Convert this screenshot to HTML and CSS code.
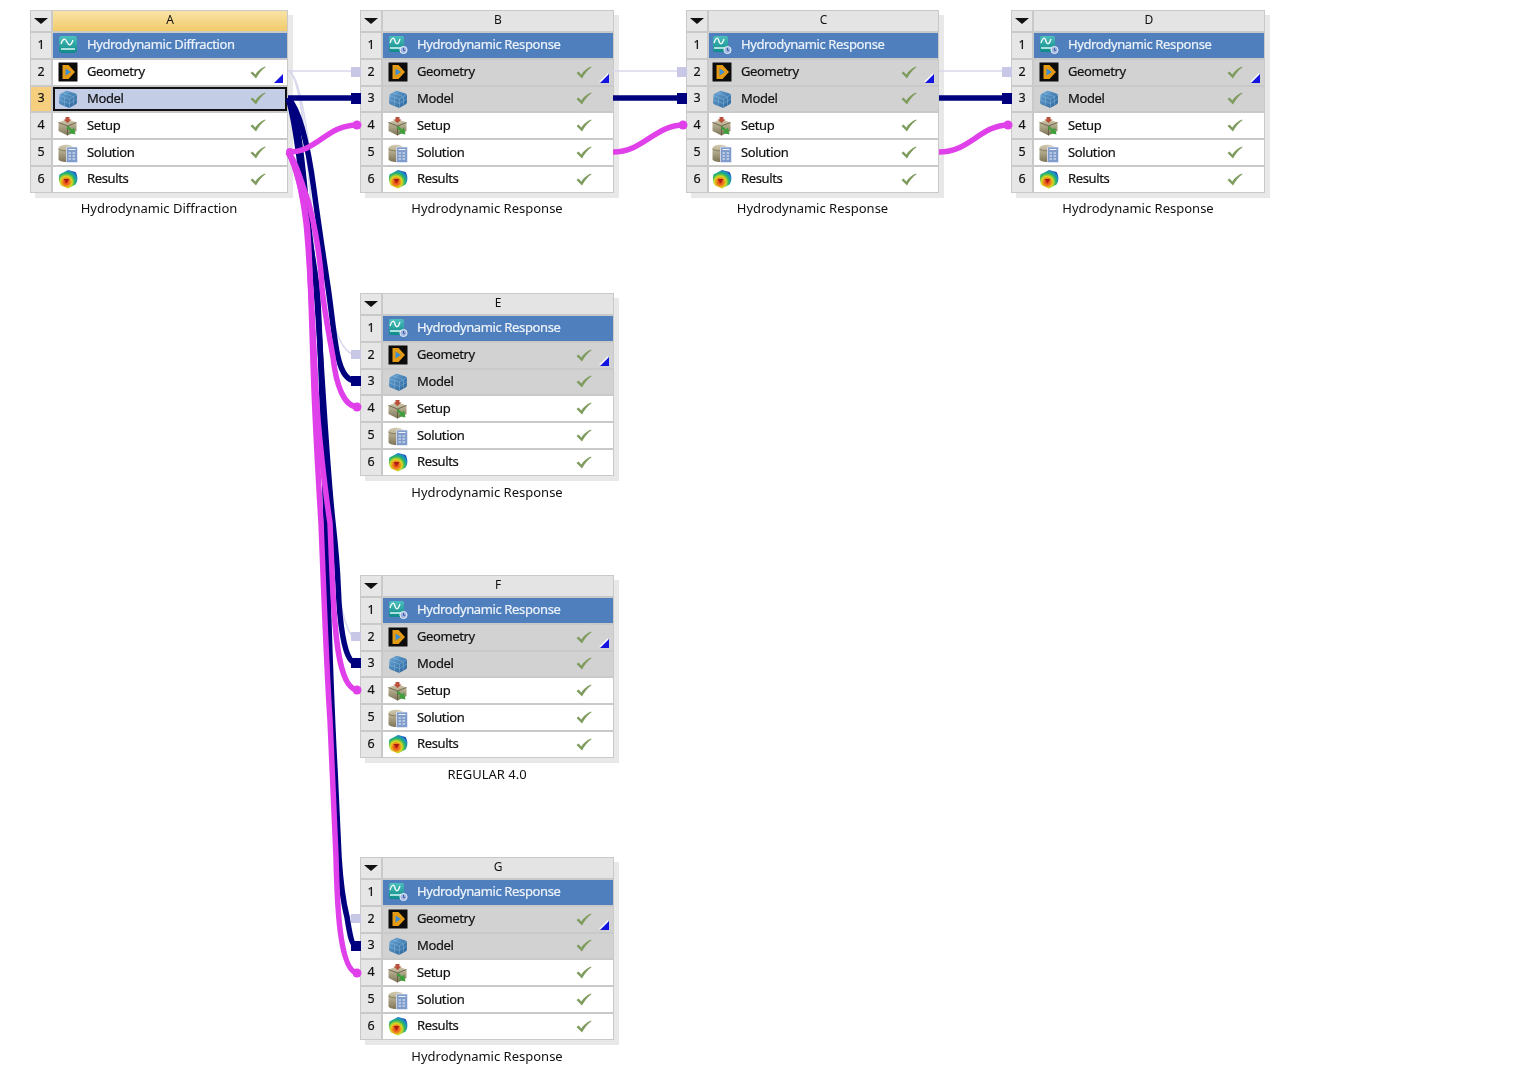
FILE: index.html
```html
<!DOCTYPE html>
<html lang="en">
<head>
    <meta charset="UTF-8">
    <title>Project Schematic</title>
    <link rel="stylesheet" href="styles.css">
</head>
<body>
    <!-- shared icons -->
    <svg class="defs" width="0" height="0">
        <defs>
            <linearGradient id="g-teal" x1="0" y1="0" x2="0" y2="1"><stop offset="0" stop-color="#4cc0bc"/><stop offset="1" stop-color="#0e8a88"/></linearGradient>
            <linearGradient id="g-block" x1="0" y1="0" x2="1" y2="1"><stop offset="0" stop-color="#6ba6d4"/><stop offset="1" stop-color="#2a6298"/></linearGradient>
            <linearGradient id="g-tan" x1="0" y1="0" x2="0" y2="1"><stop offset="0" stop-color="#d4ccb0"/><stop offset="1" stop-color="#7e7558"/></linearGradient>
            <radialGradient id="g-res" cx="0.4" cy="0.65" r="0.68"><stop offset="0" stop-color="#d82818"/><stop offset="0.28" stop-color="#f0801c"/><stop offset="0.46" stop-color="#d8d820"/><stop offset="0.68" stop-color="#28b468"/><stop offset="0.9" stop-color="#1c8cc8"/><stop offset="1" stop-color="#1c4cb8"/></radialGradient>
            <symbol id="i-diff" viewBox="0 0 20 20">
                <rect x="1" y="1" width="18" height="17" rx="3" fill="url(#g-teal)"/>
                <path d="M3 9c2-6 4-6 6-2s4 4 6-2" fill="none" stroke="#fff" stroke-width="1.300"/>
                <path d="M3 14h14" stroke="#e8ffff" stroke-width="1.400"/>
            </symbol>
            <symbol id="i-resp" viewBox="0 0 20 20">
                <rect x="1" y="1" width="15" height="16" rx="2" fill="url(#g-teal)"/>
                <path d="M2 8c2-6 4-6 5-2s3 4 5-2" fill="none" stroke="#fff" stroke-width="1.300"/>
                <path d="M2 13h11" stroke="#e8ffff" stroke-width="1.400"/>
                <circle cx="15.500" cy="15" r="3.600" fill="#9fb4e0" stroke="#fff" stroke-width=".8"/>
                <path d="M15.500 13v2.400h1.600" fill="none" stroke="#2f4f96" stroke-width=".9"/>
            </symbol>
            <symbol id="i-geom" viewBox="0 0 20 20">
                <rect x="0.500" y="0.500" width="19" height="19" fill="#0c0c0c"/>
                <path d="M4.500 3h6l6.500 7-6.500 7h-6z" fill="#e49a12"/>
                <path d="M7.500 6.500l5.500 3.500-5.500 3.500z" fill="#3f8fd0"/>
            </symbol>
            <symbol id="i-model" viewBox="0 0 20 20">
                <path d="M1.500 6.500Q1.500 5 3 4.500L8 2Q9 1.500 10 2L17.500 4.500Q19 5 19 6.500V13Q19 14.500 17.500 15.500L12 18.500Q11 19 10 18.500L2.500 15.500Q1 15 1 13.500z" fill="url(#g-block)"/>
                <path d="M1.500 6.500l10 3.500 7.500-4.500M11.500 10v8.500M1.500 11l10 3.500 7.500-4.500M6.500 8.500v8M15.500 8v8M5 4l10 3.500M11 2.500l-5 3" fill="none" stroke="#8fc0e4" stroke-width=".6" opacity=".7"/>
            </symbol>
            <symbol id="i-setup" viewBox="0 0 20 20">
                <path d="M0.500 6.500l9-3.500 9 3.500v8.500l-9 4.500-9-4.500z" fill="url(#g-tan)"/>
                <path d="M0.500 6.500l9 3.500 9-3.500M9.500 10v9.500" fill="none" stroke="#5e563e" stroke-width=".8"/>
                <path d="M7.500 1h4v2.500h2l-4 3.500-4-3.500h2z" fill="#b8503a"/>
                <path d="M8.500 12l2-2 3.500 3.500 2-2 1.500 7-7-1.500 2-2z" fill="#3f9f3c"/>
            </symbol>
            <symbol id="i-sol" viewBox="0 0 20 20">
                <path d="M0.500 5.500c0-5 15-5 15 0v10.500c0 4-15 4-15 0z" fill="url(#g-tan)"/>
                <path d="M0.500 6c3 2.500 12 2.500 15 0" fill="none" stroke="#6e664c" stroke-width=".7"/>
                <rect x="8.500" y="4" width="11" height="15.500" rx="1" fill="#7f9cca" stroke="#eef" stroke-width=".7"/>
                <path d="M10.500 6.500h7M10.500 10h2.500M14.500 10h2.500M10.500 13h2.500M14.500 13h2.500M10.500 16h2.500M14.500 16h2.500" stroke="#eef3fb" stroke-width="1.100"/>
            </symbol>
            <symbol id="i-res" viewBox="0 0 20 20">
                <path d="M1.500 5.500L10 1 17.500 3C20 7 20 12 17.500 15.500L10 19.500 3 16.500C0.500 13 0.500 9 1.500 5.500z" fill="url(#g-res)"/>
                <path d="M5.500 10h6l-3 4z" fill="#a81c10"/>
            </symbol>
            <symbol id="i-check" viewBox="0 0 16 13">
                <path d="M0.500 7l2-1.500 2.800 3C7.500 5 10.500 2.500 15 .5l.5.7C11.500 4 8.500 8 6 12.500z" fill="#7f9c5f"/>
            </symbol>
        </defs>
    </svg>

    <div class="canvas">

        <div class="system sys-a">
            <div class="table">
                <div class="menu"><span class="arrow"></span></div><div class="letter letter-active">A</div>
                <div class="num">1</div><div class="cell cell-title"><svg class="icon"><use href="#i-diff"/></svg><span class="name">Hydrodynamic Diffraction</span></div>
                <div class="num">2</div><div class="cell"><svg class="icon"><use href="#i-geom"/></svg><span class="name">Geometry</span><svg class="check"><use href="#i-check"/></svg><span class="corner"></span></div>
                <div class="num num-active">3</div><div class="cell cell-selected"><svg class="icon"><use href="#i-model"/></svg><span class="name">Model</span><svg class="check"><use href="#i-check"/></svg></div>
                <div class="num">4</div><div class="cell"><svg class="icon"><use href="#i-setup"/></svg><span class="name">Setup</span><svg class="check"><use href="#i-check"/></svg></div>
                <div class="num">5</div><div class="cell"><svg class="icon"><use href="#i-sol"/></svg><span class="name">Solution</span><svg class="check"><use href="#i-check"/></svg></div>
                <div class="num">6</div><div class="cell"><svg class="icon"><use href="#i-res"/></svg><span class="name">Results</span><svg class="check"><use href="#i-check"/></svg></div>
            </div>
            <div class="label">Hydrodynamic Diffraction</div>
        </div>

        <div class="system sys-b">
            <div class="table">
                <div class="menu"><span class="arrow"></span></div><div class="letter">B</div>
                <div class="num">1</div><div class="cell cell-title"><svg class="icon"><use href="#i-resp"/></svg><span class="name">Hydrodynamic Response</span></div>
                <div class="num">2</div><div class="cell cell-shared"><svg class="icon"><use href="#i-geom"/></svg><span class="name">Geometry</span><svg class="check"><use href="#i-check"/></svg><span class="corner corner-white"></span></div>
                <div class="num">3</div><div class="cell cell-shared"><svg class="icon"><use href="#i-model"/></svg><span class="name">Model</span><svg class="check"><use href="#i-check"/></svg></div>
                <div class="num">4</div><div class="cell"><svg class="icon"><use href="#i-setup"/></svg><span class="name">Setup</span><svg class="check"><use href="#i-check"/></svg></div>
                <div class="num">5</div><div class="cell"><svg class="icon"><use href="#i-sol"/></svg><span class="name">Solution</span><svg class="check"><use href="#i-check"/></svg></div>
                <div class="num">6</div><div class="cell"><svg class="icon"><use href="#i-res"/></svg><span class="name">Results</span><svg class="check"><use href="#i-check"/></svg></div>
            </div>
            <div class="label">Hydrodynamic Response</div>
        </div>

        <div class="system sys-c">
            <div class="table">
                <div class="menu"><span class="arrow"></span></div><div class="letter">C</div>
                <div class="num">1</div><div class="cell cell-title"><svg class="icon"><use href="#i-resp"/></svg><span class="name">Hydrodynamic Response</span></div>
                <div class="num">2</div><div class="cell cell-shared"><svg class="icon"><use href="#i-geom"/></svg><span class="name">Geometry</span><svg class="check"><use href="#i-check"/></svg><span class="corner corner-white"></span></div>
                <div class="num">3</div><div class="cell cell-shared"><svg class="icon"><use href="#i-model"/></svg><span class="name">Model</span><svg class="check"><use href="#i-check"/></svg></div>
                <div class="num">4</div><div class="cell"><svg class="icon"><use href="#i-setup"/></svg><span class="name">Setup</span><svg class="check"><use href="#i-check"/></svg></div>
                <div class="num">5</div><div class="cell"><svg class="icon"><use href="#i-sol"/></svg><span class="name">Solution</span><svg class="check"><use href="#i-check"/></svg></div>
                <div class="num">6</div><div class="cell"><svg class="icon"><use href="#i-res"/></svg><span class="name">Results</span><svg class="check"><use href="#i-check"/></svg></div>
            </div>
            <div class="label">Hydrodynamic Response</div>
        </div>

        <div class="system sys-d">
            <div class="table">
                <div class="menu"><span class="arrow"></span></div><div class="letter">D</div>
                <div class="num">1</div><div class="cell cell-title"><svg class="icon"><use href="#i-resp"/></svg><span class="name">Hydrodynamic Response</span></div>
                <div class="num">2</div><div class="cell cell-shared"><svg class="icon"><use href="#i-geom"/></svg><span class="name">Geometry</span><svg class="check"><use href="#i-check"/></svg><span class="corner corner-white"></span></div>
                <div class="num">3</div><div class="cell cell-shared"><svg class="icon"><use href="#i-model"/></svg><span class="name">Model</span><svg class="check"><use href="#i-check"/></svg></div>
                <div class="num">4</div><div class="cell"><svg class="icon"><use href="#i-setup"/></svg><span class="name">Setup</span><svg class="check"><use href="#i-check"/></svg></div>
                <div class="num">5</div><div class="cell"><svg class="icon"><use href="#i-sol"/></svg><span class="name">Solution</span><svg class="check"><use href="#i-check"/></svg></div>
                <div class="num">6</div><div class="cell"><svg class="icon"><use href="#i-res"/></svg><span class="name">Results</span><svg class="check"><use href="#i-check"/></svg></div>
            </div>
            <div class="label">Hydrodynamic Response</div>
        </div>

        <div class="system sys-e">
            <div class="table">
                <div class="menu"><span class="arrow"></span></div><div class="letter">E</div>
                <div class="num">1</div><div class="cell cell-title"><svg class="icon"><use href="#i-resp"/></svg><span class="name">Hydrodynamic Response</span></div>
                <div class="num">2</div><div class="cell cell-shared"><svg class="icon"><use href="#i-geom"/></svg><span class="name">Geometry</span><svg class="check"><use href="#i-check"/></svg><span class="corner corner-white"></span></div>
                <div class="num">3</div><div class="cell cell-shared"><svg class="icon"><use href="#i-model"/></svg><span class="name">Model</span><svg class="check"><use href="#i-check"/></svg></div>
                <div class="num">4</div><div class="cell"><svg class="icon"><use href="#i-setup"/></svg><span class="name">Setup</span><svg class="check"><use href="#i-check"/></svg></div>
                <div class="num">5</div><div class="cell"><svg class="icon"><use href="#i-sol"/></svg><span class="name">Solution</span><svg class="check"><use href="#i-check"/></svg></div>
                <div class="num">6</div><div class="cell"><svg class="icon"><use href="#i-res"/></svg><span class="name">Results</span><svg class="check"><use href="#i-check"/></svg></div>
            </div>
            <div class="label">Hydrodynamic Response</div>
        </div>

        <div class="system sys-f">
            <div class="table">
                <div class="menu"><span class="arrow"></span></div><div class="letter">F</div>
                <div class="num">1</div><div class="cell cell-title"><svg class="icon"><use href="#i-resp"/></svg><span class="name">Hydrodynamic Response</span></div>
                <div class="num">2</div><div class="cell cell-shared"><svg class="icon"><use href="#i-geom"/></svg><span class="name">Geometry</span><svg class="check"><use href="#i-check"/></svg><span class="corner corner-white"></span></div>
                <div class="num">3</div><div class="cell cell-shared"><svg class="icon"><use href="#i-model"/></svg><span class="name">Model</span><svg class="check"><use href="#i-check"/></svg></div>
                <div class="num">4</div><div class="cell"><svg class="icon"><use href="#i-setup"/></svg><span class="name">Setup</span><svg class="check"><use href="#i-check"/></svg></div>
                <div class="num">5</div><div class="cell"><svg class="icon"><use href="#i-sol"/></svg><span class="name">Solution</span><svg class="check"><use href="#i-check"/></svg></div>
                <div class="num">6</div><div class="cell"><svg class="icon"><use href="#i-res"/></svg><span class="name">Results</span><svg class="check"><use href="#i-check"/></svg></div>
            </div>
            <div class="label">REGULAR 4.0</div>
        </div>

        <div class="system sys-g">
            <div class="table">
                <div class="menu"><span class="arrow"></span></div><div class="letter">G</div>
                <div class="num">1</div><div class="cell cell-title"><svg class="icon"><use href="#i-resp"/></svg><span class="name">Hydrodynamic Response</span></div>
                <div class="num">2</div><div class="cell cell-shared"><svg class="icon"><use href="#i-geom"/></svg><span class="name">Geometry</span><svg class="check"><use href="#i-check"/></svg><span class="corner corner-white"></span></div>
                <div class="num">3</div><div class="cell cell-shared"><svg class="icon"><use href="#i-model"/></svg><span class="name">Model</span><svg class="check"><use href="#i-check"/></svg></div>
                <div class="num">4</div><div class="cell"><svg class="icon"><use href="#i-setup"/></svg><span class="name">Setup</span><svg class="check"><use href="#i-check"/></svg></div>
                <div class="num">5</div><div class="cell"><svg class="icon"><use href="#i-sol"/></svg><span class="name">Solution</span><svg class="check"><use href="#i-check"/></svg></div>
                <div class="num">6</div><div class="cell"><svg class="icon"><use href="#i-res"/></svg><span class="name">Results</span><svg class="check"><use href="#i-check"/></svg></div>
            </div>
            <div class="label">Hydrodynamic Response</div>
        </div>

        <!-- connections between systems -->
        <svg class="links" width="1519" height="1086" viewBox="0 0 1519 1086">
            <g class="link-geom">
                <path d="M288 71H351M613 71H677M939 71H1002"/>
                <path d="M288 71C300 72 308 130 318 220C326 290 332 345 352 354"/>
                <path d="M288 71C304 72 312 200 322 400C328 500 334 590 343 613Q347 630 352 636"/>
                <path d="M288 71C306 74 314 220 322 420C328 600 332 800 342 900Q346 916 352 918"/>
            </g>
            <g class="link-geom-end">
                <rect x="351" y="67" width="10" height="10"/>
                <rect x="677" y="67" width="10" height="10"/>
                <rect x="1002" y="67" width="10" height="10"/>
                <rect x="351" y="350" width="10" height="9"/>
                <rect x="351" y="632" width="10" height="9"/>
                <rect x="351" y="914" width="10" height="9"/>
            </g>
            <g class="link-model">
                <path d="M288 98H352M613 98H678M939 98H1003"/>
                <!-- to E, F, G: thick band leaving A, then splitting -->
                <path d="M288 98C300 110 308 145 314 190S324 260 328 287S334 340 338 357C341 370 346 381 356 381"/>
                <path d="M288 98C296 110 300 140 305 190S312 260 316 287C319 320 326 460 333 523S337 585 340 615C343 645 348 663 356 663"/>
                <path d="M288 98C292 110 298 145 303 190S313 255 317 287C321 340 324 470 326 523C328 590 330 680 335 770C337 810 338 840 339 857C341 890 344 905 347 917C350 936 352 946 356 946"/>
            </g>
            <g class="link-model-end">
                <rect x="351" y="93" width="10" height="11"/>
                <rect x="677" y="93" width="10" height="11"/>
                <rect x="1002" y="93" width="10" height="11"/>
                <rect x="351" y="376" width="10" height="10"/>
                <rect x="351" y="658" width="10" height="10"/>
                <rect x="351" y="941" width="10" height="10"/>
            </g>
            <g class="link-solution">
                <path d="M288 152C318 152 326 125 358 125M613 152C644 152 654 125 684 125M939 152C970 152 980 125 1009 125"/>
                <path d="M288 152C296 162 300 178 306 195C312 212 320 250 322 287C324 310 330 340 333 357C336 385 344 407 358 407"/>
                <path d="M288 152C296 165 302 190 306 223C310 260 314 350 316 390C318 430 325 490 330 523C331 545 332 580 334 610C336 640 340 690 358 690"/>
                <path d="M288 152C296 165 303 195 307 223C310 245 312 340 314 390C316 440 319 490 321 523C323 570 326 660 330 720C332 770 334 820 336 857C337 900 339 973 358 973"/>
            </g>
            <g class="link-solution-end">
                <circle cx="357" cy="125" r="4.500"/>
                <circle cx="683" cy="125" r="4.500"/>
                <circle cx="1008" cy="125" r="4.500"/>
                <circle cx="357" cy="407" r="4.500"/>
                <circle cx="357" cy="690" r="4.500"/>
                <circle cx="357" cy="973" r="4.500"/>
                <circle cx="290" cy="152" r="4"/>
            </g>
        </svg>
    </div>
</body>
</html>
```

FILE: styles.css
```css
body {
    margin: 0;
    background: white;
    font-family: "Noto Sans", "Open Sans", sans-serif;
    color: #111;
}
.defs {
    position: absolute;
}
.canvas {
    position: relative;
    width: 1519px;
    height: 1086px;
    overflow: hidden;
    filter: blur(0.5px);
}

.system {
    position: absolute;
    width: 254px;
}
.sys-a { left: 30px; top: 10px; width: 258px; }
.sys-b { left: 360px; top: 10px; }
.sys-c { left: 686px; top: 10px; width: 253px; }
.sys-d { left: 1011px; top: 10px; }
.sys-e { left: 360px; top: 293px; }
.sys-f { left: 360px; top: 575px; }
.sys-g { left: 360px; top: 857px; }

.table {
    display: grid;
    grid-template-columns: 20px 1fr;
    grid-template-rows: 20px repeat(6, 24.8px);
    gap: 2px;
    height: 183px;
    box-sizing: border-box;
    background: #c9c9c9;
    border: 1px solid #c9c9c9;
    box-shadow: 5px 5px 0 #e8e8e8;
}
.menu {
    background: #e6e6e6;
    display: flex;
    align-items: center;
    justify-content: center;
}
.arrow {
    border-left: 7px solid transparent;
    border-right: 7px solid transparent;
    border-top: 6px solid #111;
}
.letter {
    background: #e4e4e4;
    font-size: 12px;
    line-height: 18px;
    text-align: center;
}
.letter-active {
    background: linear-gradient(#f8e3a6, #f2cb6a);
}
.num {
    background: #e6e6e6;
    font-size: 12.5px;
    padding-bottom: 2px;
    box-sizing: border-box;
    display: flex;
    align-items: center;
    justify-content: center;
    -webkit-text-stroke: 0.2px #111;
}
.num-active {
    background: #f5cf7d;
}
.cell {
    position: relative;
    display: flex;
    align-items: center;
    background: white;
    padding-left: 5px;
    font-size: 13px;
}
.cell-title {
    background: #4f80bd;
    color: #eef3fa;
}
.cell-shared {
    background: #d2d2d2;
}
.cell-selected {
    background: #c3cde6;
    box-shadow: inset 0 0 0 2px #111;
}
.icon {
    width: 20px;
    height: 20px;
    flex: none;
}
.sys-c .icon {
    margin-left: -2px;
}
.name {
    margin-left: 9px;
    margin-bottom: 2px;
    letter-spacing: -0.38px;
    white-space: nowrap;
    -webkit-text-stroke: 0.2px currentColor;
}
.check {
    width: 16px;
    height: 13px;
    margin-left: auto;
    margin-right: 21px;
    flex: none;
}
.corner {
    position: absolute;
    right: 4px;
    bottom: 2px;
    width: 0;
    height: 0;
    border-left: 9px solid transparent;
    border-bottom: 9px solid #1414e0;
}
.corner-white {
    filter: drop-shadow(-1px -1px 0 white);
}
.label {
    margin-top: 6px;
    font-size: 13px;
    line-height: 18px;
    text-align: center;
}
.sys-e .label,
.sys-f .label,
.sys-g .label {
    margin-top: 7px;
}

.links {
    position: absolute;
    left: 0;
    top: 0;
    pointer-events: none;
}
.links path {
    fill: none;
    stroke-linejoin: round;
}
.link-geom path {
    stroke: #d8d8ee;
    stroke-width: 1.500;
}
.link-geom-end rect {
    fill: #c8c8e6;
}
.link-model path {
    stroke: #00007f;
    stroke-width: 5.500;
}
.link-model-end rect {
    fill: #00007f;
}
.link-solution path {
    stroke: #e040ea;
    stroke-width: 5.500;
}
.link-solution-end circle {
    fill: #e040ea;
}
```
